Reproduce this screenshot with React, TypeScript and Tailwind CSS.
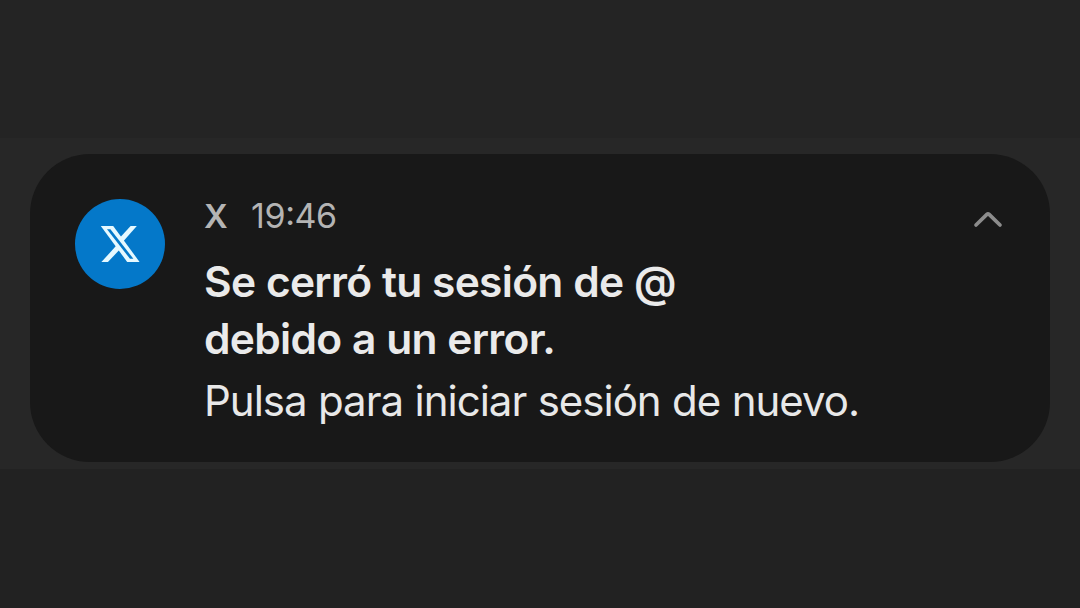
const XLogo = () => (
  <svg viewBox="0 0 44 44" className="size-11" fill="none">
    <path d="M2.8 3.9H15.2L41.6 40H29.2Z" fill="#e6f9ff" />
    <path d="M9 7.3H12.4L35.4 36.8H32Z" fill="#0478c9" />
    <path d="M32.6 3.9H38.8L25.2 19.4L22.1 15.6Z" fill="#e6f9ff" />
    <path d="M18.4 23.6L21.5 27.8L9.9 40H3.4Z" fill="#e6f9ff" />
  </svg>
);

const ChevronUp = () => (
  <svg viewBox="0 0 36 28" className="h-7 w-9" fill="none">
    <path
      d="M6 20L16.9 9.4Q18 8.3 19.1 9.4L30 20"
      stroke="#8c8c8c"
      strokeWidth="3.7"
      strokeLinecap="round"
      strokeLinejoin="round"
    />
  </svg>
);

export default function App() {
  return (
    <div className="flex h-[608px] w-[1080px] flex-col overflow-hidden bg-[#222222] font-['Inter',sans-serif]">
      <div className="h-[138px] bg-[#242424]" />
      <div className="h-[331px] bg-[#272727] px-[30px] pt-4">
        <div className="flex h-[308px] items-start rounded-[60px] bg-[#181818] pr-11 pl-[45px]">
          <div className="mt-[45px] flex size-[90px] items-center justify-center rounded-full bg-[#0478c9]">
            <XLogo />
          </div>
          <div className="ml-[39px] flex-1 pt-[42px] whitespace-nowrap">
            <div className="flex h-10 items-baseline gap-[25px] text-[34px] leading-10 text-[#b4b4b4]">
              <span className="w-[22px] text-[33px] font-semibold">X</span>
              <span className="tracking-[-0.4px]">
                19<span className="inline-block -translate-y-[3px]">:</span>46
              </span>
            </div>
            <h2 className="mt-[17px] text-[42.5px] leading-[57px] font-semibold tracking-[-0.7px] text-[#eaeaea] [word-spacing:0.5px]">
              Se cerró tu sesión de @<br />
              debido a un error.
            </h2>
            <p className="mt-px text-[42px] leading-[66px] tracking-[-1px] text-[#e8e8e8] [word-spacing:0.6px]">
              Pulsa para iniciar sesión de nuevo.
            </p>
          </div>
          <div className="mt-[51px]">
            <ChevronUp />
          </div>
        </div>
      </div>
    </div>
  );
}
